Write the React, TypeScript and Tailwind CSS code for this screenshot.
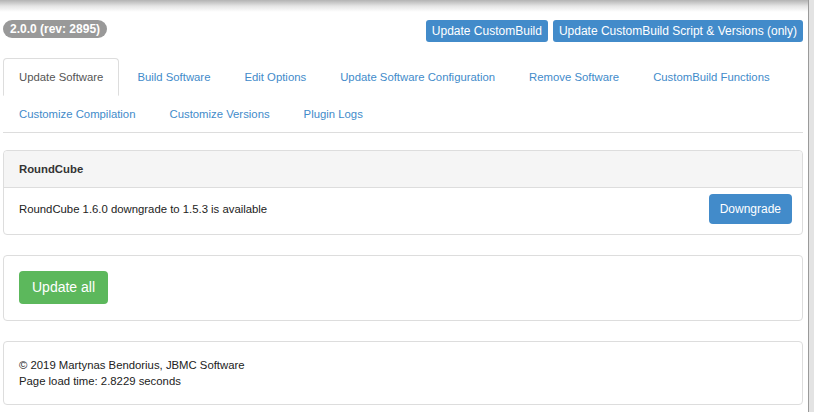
import React from "react";

const tabs = [
  "Update Software",
  "Build Software",
  "Edit Options",
  "Update Software Configuration",
  "Remove Software",
  "CustomBuild Functions",
  "Customize Compilation",
  "Customize Versions",
  "Plugin Logs",
];

export default function App() {
  return (
    <div className="flex min-h-[412px] w-[814px] bg-white font-['Liberation_Sans',Arial,sans-serif] text-[11.33px] text-[#333]">
      <div className="w-[808px] flex flex-col">
        <div className="h-[12px] bg-gradient-to-b from-[#b3b3b3] via-[#e4e4e4] to-white" />
        <div className="pl-[3px] pr-[5px] pt-[8px]">
          {/* header */}
          <div className="flex items-start justify-between">
            <span className="inline-block rounded-[10px] bg-[#999999] px-[7px] py-[3px] text-[12px] font-bold leading-[12px] text-white">
              2.0.0 (rev: 2895)
            </span>
            <div className="flex gap-[5px]">
              <button className="rounded-[3px] bg-[#428bca] px-[6px] py-[3px] text-[12px] leading-[16px] text-white">
                Update CustomBuild
              </button>
              <button className="rounded-[3px] bg-[#428bca] px-[6px] py-[3px] text-[12px] leading-[16px] text-white">
                Update CustomBuild Script &amp; Versions (only)
              </button>
            </div>
          </div>

          {/* tabs */}
          <ul className="mt-[16px] flex flex-wrap border-b border-[#dddddd]">
            {tabs.map((t, i) => (
              <li key={t} className="-mb-[1px] mr-[2px]">
                <span
                  className={
                    i === 0
                      ? "block rounded-t-[4px] border border-[#dddddd] border-b-transparent bg-white px-[15px] py-[10px] leading-[16px] text-[#555555]"
                      : "block border border-transparent px-[15px] py-[10px] leading-[16px] text-[#428bca]"
                  }
                >
                  {t}
                </span>
              </li>
            ))}
          </ul>

          {/* panel 1 */}
          <div className="mt-[17px] rounded-[4px] border border-[#dddddd]">
            <div className="rounded-t-[4px] border-b border-[#dddddd] bg-[#f5f5f5] px-[15px] py-[10px] font-bold leading-[16px] text-[#333]">
              RoundCube
            </div>
            <div className="flex items-center justify-between pl-[15px] pr-[10px] pt-[6px] pb-[10px]">
              <span className="leading-[16px] text-[#222]">RoundCube 1.6.0 downgrade to 1.5.3 is available</span>
              <button className="rounded-[4px] bg-[#428bca] px-[11px] py-[6px] text-[12px] leading-[18px] text-white">
                Downgrade
              </button>
            </div>
          </div>

          {/* panel 2 */}
          <div className="mt-[20px] rounded-[4px] border border-[#dddddd] px-[15px] pt-[15px] pb-[16px]">
            <button className="rounded-[4px] bg-[#5cb85c] px-[13px] py-[6px] text-[14px] leading-[21px] text-white">
              Update all
            </button>
          </div>

          {/* panel 3 */}
          <div className="mt-[20px] rounded-[4px] border border-[#dddddd] px-[15px] py-[15px] leading-[16px] text-[#222]">
            <div>© 2019 Martynas Bendorius, JBMC Software</div>
            <div>Page load time: 2.8229 seconds</div>
          </div>
        </div>
      </div>
      <div className="w-[6px] border-l border-[#9a9a9a] bg-[#e3e3e3]" />
    </div>
  );
}
